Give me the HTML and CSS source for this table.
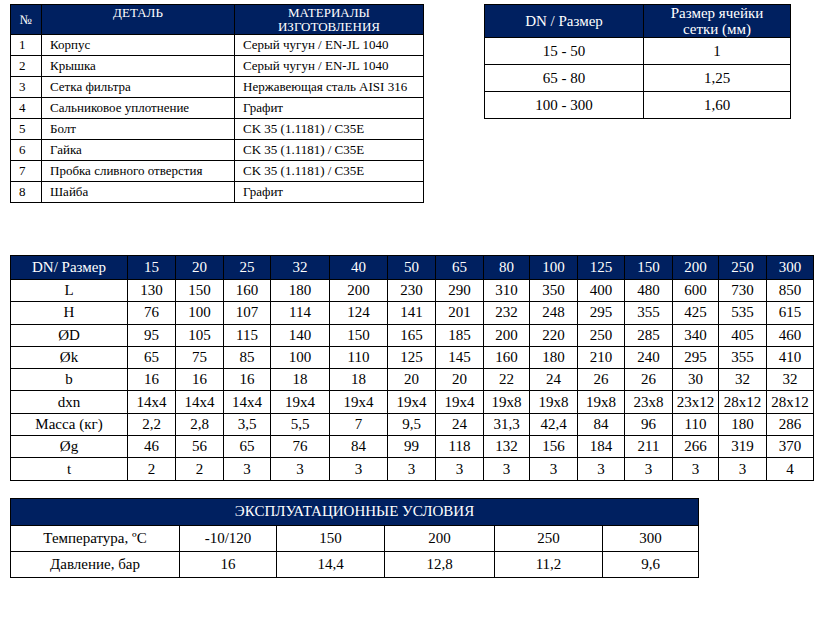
FILE: index.html
```html
<!DOCTYPE html>
<html lang="ru">
<head>
<meta charset="utf-8">
<title>Фильтр — спецификация</title>
<link rel="stylesheet" href="styles.css">
</head>
<body>
<div class="page">
  <div class="top">
    <table class="tbl parts">
      <colgroup><col class="c-no"><col class="c-part"><col class="c-mat"></colgroup>
      <thead>
        <tr><th class="mid">№</th><th>ДЕТАЛЬ</th><th>МАТЕРИАЛЫ<br>ИЗГОТОВЛЕНИЯ</th></tr>
      </thead>
      <tbody>
        <tr><td>1</td><td>Корпус</td><td>Серый чугун / EN-JL 1040</td></tr>
        <tr><td>2</td><td>Крышка</td><td>Серый чугун / EN-JL 1040</td></tr>
        <tr><td>3</td><td>Сетка фильтра</td><td>Нержавеющая сталь AISI 316</td></tr>
        <tr><td>4</td><td>Сальниковое уплотнение</td><td>Графит</td></tr>
        <tr><td>5</td><td>Болт</td><td>CK 35 (1.1181) / C35E</td></tr>
        <tr><td>6</td><td>Гайка</td><td>CK 35 (1.1181) / C35E</td></tr>
        <tr><td>7</td><td>Пробка сливного отверстия</td><td>CK 35 (1.1181) / C35E</td></tr>
        <tr><td>8</td><td>Шайба</td><td>Графит</td></tr>
      </tbody>
    </table>

    <table class="tbl mesh">
      <colgroup><col class="c-dn"><col class="c-cell"></colgroup>
      <thead>
        <tr><th>DN / Размер</th><th>Размер ячейки<br>сетки (мм)</th></tr>
      </thead>
      <tbody>
        <tr><td>15 - 50</td><td>1</td></tr>
        <tr><td>65 - 80</td><td>1,25</td></tr>
        <tr><td>100 - 300</td><td>1,60</td></tr>
      </tbody>
    </table>
  </div>

  <table class="tbl dims">
    <colgroup>
      <col class="d-head">
      <col class="d48"><col class="d48"><col class="d47"><col class="d59"><col class="d58">
      <col class="d48"><col class="d48"><col class="d46"><col class="d48"><col class="d47">
      <col class="d48"><col class="d46"><col class="d48"><col class="d47">
    </colgroup>
    <thead>
      <tr><th>DN/ Размер</th><th>15</th><th>20</th><th>25</th><th>32</th><th>40</th><th>50</th><th>65</th><th>80</th><th>100</th><th>125</th><th>150</th><th>200</th><th>250</th><th>300</th></tr>
    </thead>
    <tbody>
      <tr><td>L</td><td>130</td><td>150</td><td>160</td><td>180</td><td>200</td><td>230</td><td>290</td><td>310</td><td>350</td><td>400</td><td>480</td><td>600</td><td>730</td><td>850</td></tr>
      <tr><td>H</td><td>76</td><td>100</td><td>107</td><td>114</td><td>124</td><td>141</td><td>201</td><td>232</td><td>248</td><td>295</td><td>355</td><td>425</td><td>535</td><td>615</td></tr>
      <tr><td>ØD</td><td>95</td><td>105</td><td>115</td><td>140</td><td>150</td><td>165</td><td>185</td><td>200</td><td>220</td><td>250</td><td>285</td><td>340</td><td>405</td><td>460</td></tr>
      <tr><td>Øk</td><td>65</td><td>75</td><td>85</td><td>100</td><td>110</td><td>125</td><td>145</td><td>160</td><td>180</td><td>210</td><td>240</td><td>295</td><td>355</td><td>410</td></tr>
      <tr><td>b</td><td>16</td><td>16</td><td>16</td><td>18</td><td>18</td><td>20</td><td>20</td><td>22</td><td>24</td><td>26</td><td>26</td><td>30</td><td>32</td><td>32</td></tr>
      <tr><td>dxn</td><td>14x4</td><td>14x4</td><td>14x4</td><td>19x4</td><td>19x4</td><td>19x4</td><td>19x4</td><td>19x8</td><td>19x8</td><td>19x8</td><td>23x8</td><td>23x12</td><td>28x12</td><td>28x12</td></tr>
      <tr><td>Масса (кг)</td><td>2,2</td><td>2,8</td><td>3,5</td><td>5,5</td><td>7</td><td>9,5</td><td>24</td><td>31,3</td><td>42,4</td><td>84</td><td>96</td><td>110</td><td>180</td><td>286</td></tr>
      <tr><td>Øg</td><td>46</td><td>56</td><td>65</td><td>76</td><td>84</td><td>99</td><td>118</td><td>132</td><td>156</td><td>184</td><td>211</td><td>266</td><td>319</td><td>370</td></tr>
      <tr><td>t</td><td>2</td><td>2</td><td>3</td><td>3</td><td>3</td><td>3</td><td>3</td><td>3</td><td>3</td><td>3</td><td>3</td><td>3</td><td>3</td><td>4</td></tr>
    </tbody>
  </table>

  <table class="tbl cond">
    <colgroup>
      <col class="k1"><col class="k2"><col class="k3"><col class="k4"><col class="k5"><col class="k6">
    </colgroup>
    <thead>
      <tr><th colspan="6">ЭКСПЛУАТАЦИОННЫЕ УСЛОВИЯ</th></tr>
    </thead>
    <tbody>
      <tr><td>Температура, ºС</td><td>-10/120</td><td>150</td><td>200</td><td>250</td><td>300</td></tr>
      <tr><td>Давление, бар</td><td>16</td><td>14,4</td><td>12,8</td><td>11,2</td><td>9,6</td></tr>
    </tbody>
  </table>
</div>
</body>
</html>
```

FILE: styles.css
```css
html, body {
  margin: 0;
  padding: 0;
  background: #ffffff;
}

.page {
  padding: 4px 0 0 10px;
  font-family: "Liberation Serif", "Times New Roman", serif;
  color: #000;
}

.top {
  display: flex;
  align-items: flex-start;
  gap: 60px;
}

.tbl {
  border-collapse: collapse;
  table-layout: fixed;
  font-family: "Liberation Serif", "Times New Roman", serif;
}

.tbl th,
.tbl td {
  border: 1px solid #000;
  padding: 0;
}

.tbl th {
  background: #002060;
  color: #ffffff;
  font-weight: normal;
}

/* Parts table */
.parts {
  width: 413px;
  font-size: 13px;
}
.c-no { width: 31px; }
.c-part { width: 193px; }
.c-mat { width: 189px; }

.parts th {
  height: 28px;
  line-height: 14px;
  vertical-align: top;
  text-align: center;
  padding-top: 1px;
}
.parts th.mid {
  vertical-align: middle;
}
.parts td {
  height: 21px;
  line-height: 15px;
  vertical-align: top;
  padding: 2px 0 0 8px;
  box-sizing: border-box;
}

/* Mesh table */
.mesh {
  width: 306px;
  font-size: 15px;
}
.c-dn { width: 159px; }
.c-cell { width: 147px; }
.mesh th {
  height: 31px;
  line-height: 16px;
  text-align: center;
  vertical-align: middle;
}
.mesh td {
  height: 26px;
  text-align: center;
  vertical-align: middle;
}

/* Dimensions table */
.dims {
  width: 803px;
  margin-top: 52px;
  font-size: 15px;
}
.d-head { width: 117px; }
.d46 { width: 46px; }
.d47 { width: 47px; }
.d48 { width: 48px; }
.d58 { width: 58px; }
.d59 { width: 59px; }
.dims th {
  height: 23px;
  text-align: center;
  vertical-align: middle;
}
.dims td {
  height: 21.3px;
  text-align: center;
  vertical-align: middle;
}

/* Conditions table */
.cond {
  width: 688px;
  margin-top: 17px;
  font-size: 15px;
}
.k1 { width: 169px; }
.k2 { width: 97px; }
.k3 { width: 108px; }
.k4 { width: 110px; }
.k5 { width: 108px; }
.k6 { width: 96px; }
.cond th {
  height: 26px;
  text-align: center;
  vertical-align: middle;
}
.cond td {
  height: 25px;
  text-align: center;
  vertical-align: middle;
}
```
